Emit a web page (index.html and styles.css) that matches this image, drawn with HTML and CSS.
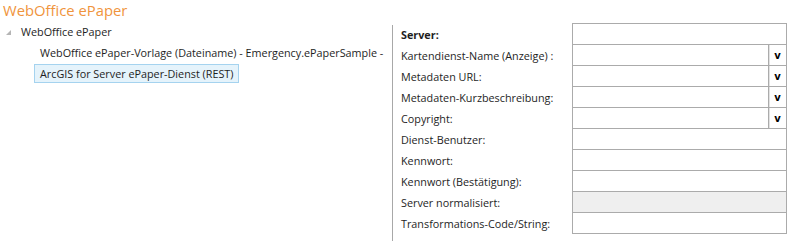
FILE: index.html
```html
<!DOCTYPE html>
<html lang="de">
<head>
    <meta charset="UTF-8">
    <title>WebOffice ePaper</title>
    <link rel="stylesheet" href="styles.css">
</head>
<body>
    <h1 class="title">WebOffice ePaper</h1>

    <div class="main">
        <div class="tree">
            <div class="node root">
                <span class="arrow"></span>
                <span>WebOffice ePaper</span>
            </div>
            <div class="node child">
                <span>WebOffice ePaper-Vorlage (Dateiname) - Emergency.ePaperSample -</span>
            </div>
            <div class="node child">
                <span class="selected">ArcGIS for Server ePaper-Dienst (REST)</span>
            </div>
        </div>

        <div class="props">
            <div class="row">
                <label class="bold">Server:</label>
                <div class="field"></div>
            </div>
            <div class="row">
                <label>Kartendienst-Name (Anzeige) :</label>
                <div class="field combo"><span class="drop">v</span></div>
            </div>
            <div class="row">
                <label>Metadaten URL:</label>
                <div class="field combo"><span class="drop">v</span></div>
            </div>
            <div class="row">
                <label>Metadaten-Kurzbeschreibung:</label>
                <div class="field combo"><span class="drop">v</span></div>
            </div>
            <div class="row">
                <label>Copyright:</label>
                <div class="field combo"><span class="drop">v</span></div>
            </div>
            <div class="row">
                <label>Dienst-Benutzer:</label>
                <div class="field"></div>
            </div>
            <div class="row">
                <label>Kennwort:</label>
                <div class="field"></div>
            </div>
            <div class="row">
                <label>Kennwort (Bestätigung):</label>
                <div class="field"></div>
            </div>
            <div class="row">
                <label>Server normalisiert:</label>
                <div class="field disabled"></div>
            </div>
            <div class="row">
                <label>Transformations-Code/String:</label>
                <div class="field"></div>
            </div>
        </div>
    </div>
</body>
</html>
```

FILE: styles.css
```css
* {
    margin: 0;
    padding: 0;
    box-sizing: border-box;
}

body {
    font-family: 'Open Sans', 'Noto Sans', sans-serif;
    font-size: 10.8px;
    color: #1e1e1e;
    background: #ffffff;
    width: 790px;
    height: 241px;
    overflow: hidden;
}

.title {
    font-size: 14.8px;
    font-weight: normal;
    color: #f0943c;
    line-height: 20px;
    padding-left: 3px;
    height: 21px;
}

.main {
    display: flex;
    height: 220px;
}

/* linke Seite: Baum */
.tree {
    width: 392px;
}

.node {
    height: 21px;
    display: flex;
    align-items: center;
    white-space: nowrap;
}

.root {
    padding-left: 6px;
}

.arrow {
    width: 0;
    height: 0;
    border-left: 5px solid transparent;
    border-bottom: 5px solid #b5b5b5;
    margin-right: 10px;
    margin-top: 2px;
}

.child {
    padding-left: 34px;
}

.child span {
    padding: 0 5px;
    border: 1px solid transparent;
    line-height: 17px;
}

.selected {
    background: #e5f3fb;
    border-color: #a5d3ef !important;
}

/* rechte Seite: Eigenschaften */
.props {
    flex: 1;
    border-left: 1px solid #a8a8a8;
    margin-top: 4px;
    padding-left: 8px;
}

.row {
    display: flex;
    height: 21px;
    align-items: stretch;
}

.row:first-child {
    margin-top: -2px;
}

.row label {
    width: 171px;
    display: flex;
    align-items: center;
    padding-top: 2px;
}

.bold {
    font-weight: bold;
}

.field {
    width: 215px;
    height: 22px;
    border: 1px solid #ababab;
    background: #ffffff;
    display: flex;
    justify-content: flex-end;
}

.disabled {
    background: #efefef;
}

.drop {
    width: 18px;
    border-left: 1px solid #ababab;
    box-shadow: inset 1px 0 0 #e2e2e2;
    font-family: 'DejaVu Sans', sans-serif;
    font-weight: bold;
    font-size: 10px;
    color: #000;
    display: flex;
    align-items: center;
    justify-content: center;
}
```
